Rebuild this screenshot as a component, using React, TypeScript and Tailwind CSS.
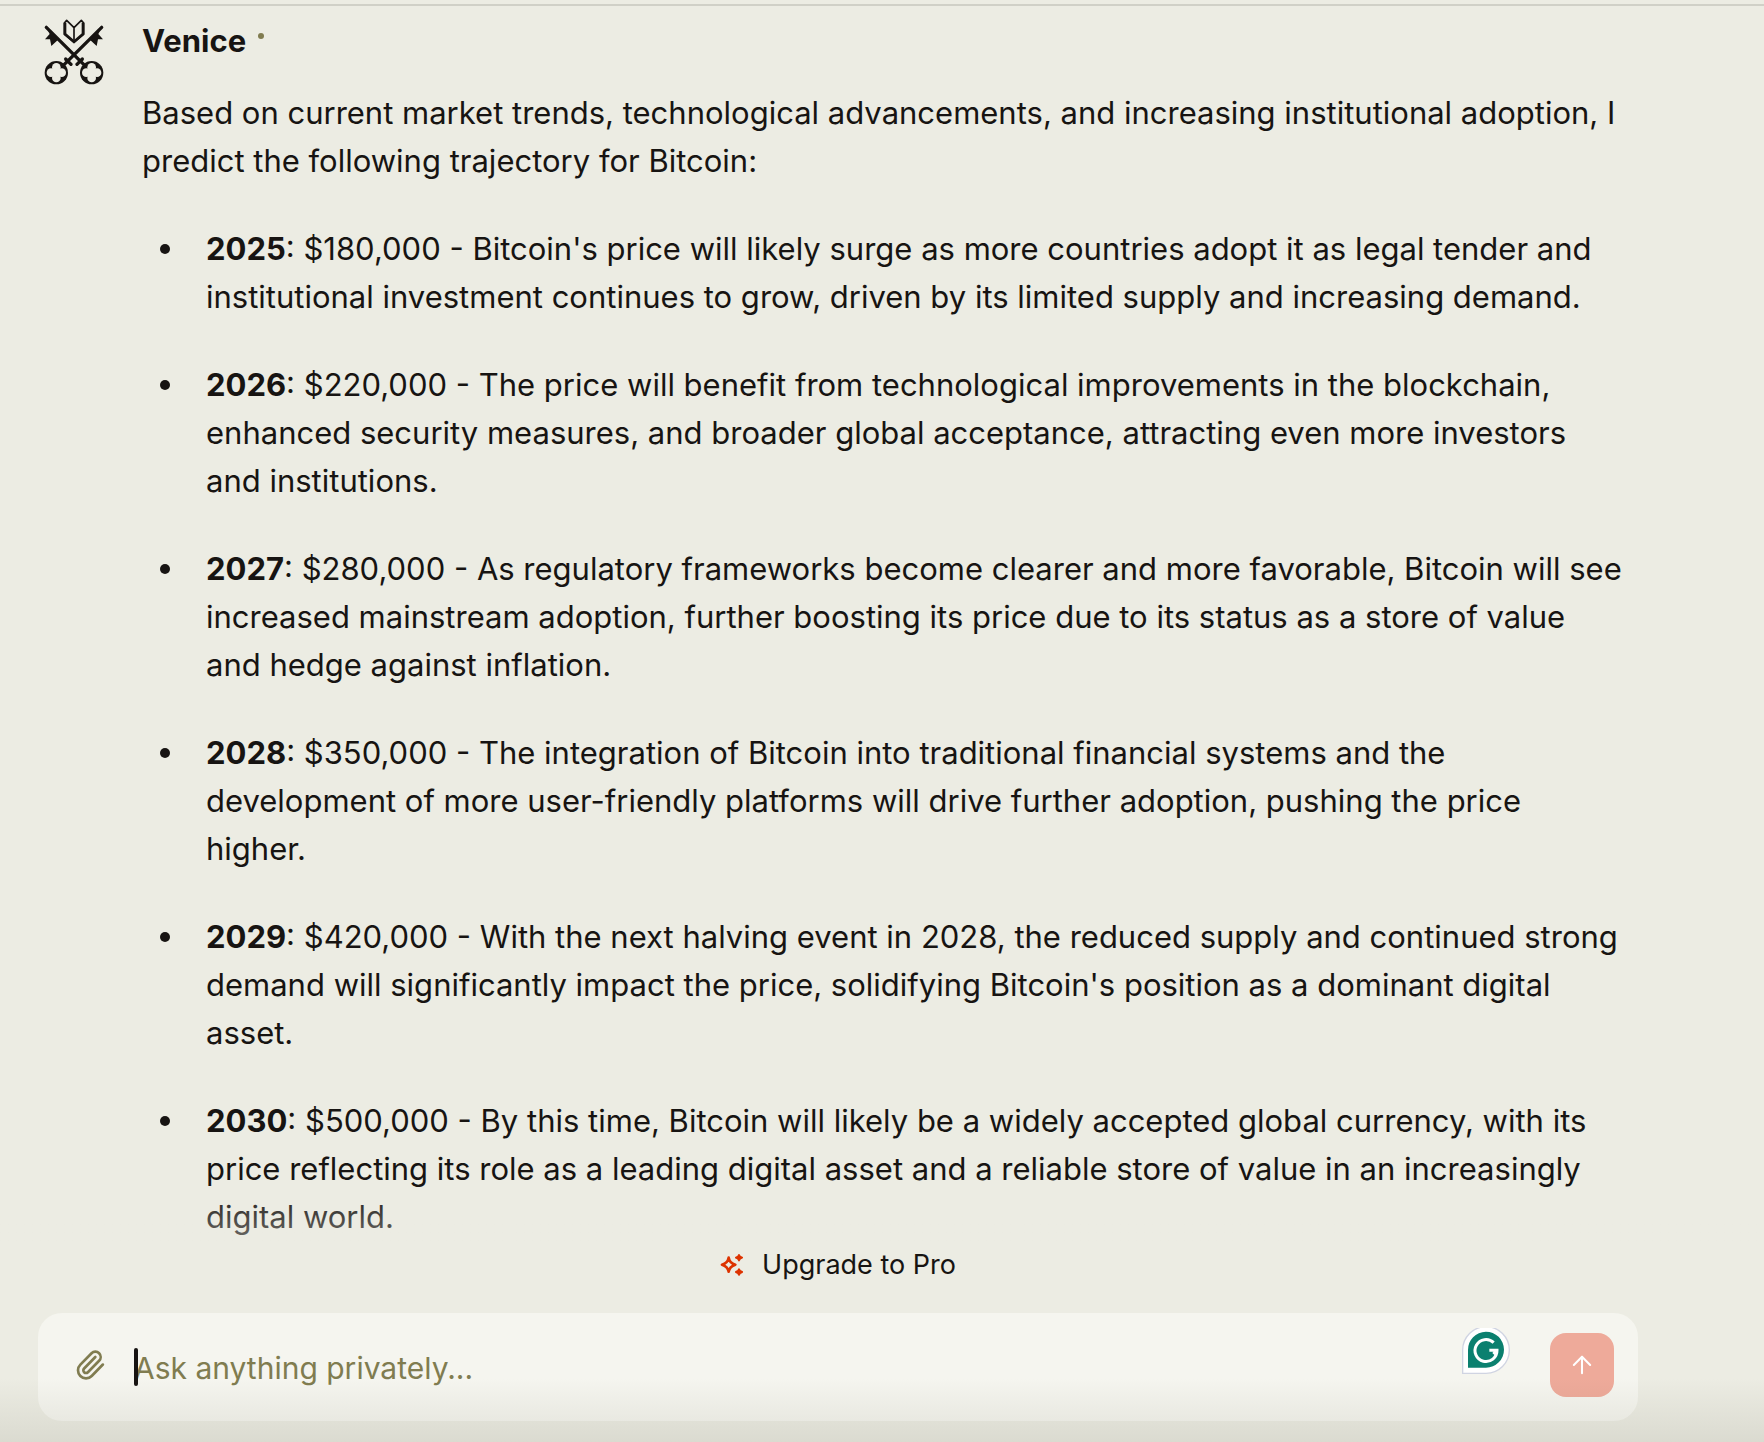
import { ArrowUp, Paperclip } from "lucide-react";

const predictions = [
  {
    year: "2025",
    text: "$180,000 - Bitcoin's price will likely surge as more countries adopt it as legal tender and institutional investment continues to grow, driven by its limited supply and increasing demand.",
  },
  {
    year: "2026",
    text: "$220,000 - The price will benefit from technological improvements in the blockchain, enhanced security measures, and broader global acceptance, attracting even more investors and institutions.",
  },
  {
    year: "2027",
    text: "$280,000 - As regulatory frameworks become clearer and more favorable, Bitcoin will see increased mainstream adoption, further boosting its price due to its status as a store of value and hedge against inflation.",
  },
  {
    year: "2028",
    text: "$350,000 - The integration of Bitcoin into traditional financial systems and the development of more user-friendly platforms will drive further adoption, pushing the price higher.",
  },
  {
    year: "2029",
    text: "$420,000 - With the next halving event in 2028, the reduced supply and continued strong demand will significantly impact the price, solidifying Bitcoin's position as a dominant digital asset.",
  },
  {
    year: "2030",
    text: "$500,000 - By this time, Bitcoin will likely be a widely accepted global currency, with its price reflecting its role as a leading digital asset and a reliable store of value in an increasingly digital world.",
  },
];

function Key() {
  return (
    <g>
      <path d="M31 46 L146 160" stroke="#171412" strokeWidth="10" strokeLinecap="round" />
      <path d="M36 56 L41 66 L27 82 L42 82 L46 102 L68 82 Z" fill="#171412" />
      <path d="M123 157 L139 141" stroke="#171412" strokeWidth="10" strokeLinecap="round" />
      <circle cx="167" cy="182" r="35" fill="#171412" />
      <g fill="#ecece3">
        <circle cx="167" cy="166" r="13" />
        <circle cx="167" cy="198" r="13" />
        <circle cx="151" cy="182" r="13" />
        <circle cx="183" cy="182" r="13" />
        <rect x="156" y="171" width="22" height="22" />
      </g>
    </g>
  );
}

function VeniceLogo() {
  return (
    <svg viewBox="0 0 228 234" className="h-[78px] w-[76px] shrink-0" fill="none" aria-hidden="true">
      <Key />
      <g transform="translate(228 0) scale(-1 1)">
        <Key />
      </g>
      <path
        d="M85 33 L92 25 L114 47 L136 25 L143 33 V67 L114 91 L85 67 Z M114 47 V91"
        stroke="#171412"
        strokeWidth="5"
        strokeLinejoin="round"
      />
      <path d="M87 32 V66 L114 89 L141 66 V32" stroke="#171412" strokeWidth="8" />
    </svg>
  );
}

function Sparkles() {
  return (
    <svg viewBox="0 0 72 72" className="size-6" aria-hidden="true">
      <path
        d="M26 14 C28 26 33 31 46 35 C33 39 28 44 26 56 C24 44 19 39 6 35 C19 31 24 26 26 14 Z"
        fill="none"
        stroke="#dd3300"
        strokeWidth="8"
        strokeLinejoin="round"
      />
      <path
        d="M57 6 L60 11 L66 14 L60 17 L57 22 L54 17 L48 14 L54 11 Z M57 49 L60 54 L66 57 L60 60 L57 65 L54 60 L48 57 L54 54 Z"
        fill="#dd3300"
        stroke="#dd3300"
        strokeWidth="6"
        strokeLinejoin="round"
      />
    </svg>
  );
}

function GrammarlyBadge() {
  return (
    <svg viewBox="0 0 144 138" className="h-[46px] w-12" fill="none" aria-hidden="true">
      <path d="M2 136 V66 A70 70 0 0 1 142 66 A70 70 0 0 1 72 136 Z" fill="#fff" stroke="#d0d4e2" strokeWidth="4" />
      <path d="M18 119 V66 A54 54 0 1 1 72 119 Z" fill="#0b806f" />
      <path d="M95 44 A33 33 0 1 0 105 67 H82 M105 67 L94 78" stroke="#fff" strokeWidth="9" />
    </svg>
  );
}

export default function App() {
  return (
    <div className="relative flex min-h-screen flex-col bg-[#ecece3] font-['Inter',sans-serif] text-[#171412]">
      <div className="mt-1 h-0.5 bg-[#d0d0c7]" />

      {/* Message */}
      <main className="flex gap-[30px] pt-1.5 pr-[138px] pl-9">
        <VeniceLogo />
        <article className="min-w-0 flex-1 pt-[5px] text-[31px] leading-[48px]">
          <header className="flex gap-3">
            <h1 className="font-bold">Venice</h1>
            <span className="mt-4 size-1.5 rounded-full bg-[#807c50]" />
          </header>
          <p className="mt-6">
            Based on current market trends, technological advancements, and increasing institutional adoption, I
            predict the following trajectory for Bitcoin:
          </p>
          <ul className="mt-10 space-y-10">
            {predictions.map((item) => (
              <li key={item.year} className="flex gap-9">
                <span className="mt-[19px] ml-[18px] size-2.5 shrink-0 rounded-full bg-[#171412]" />
                <p>
                  <strong className="font-bold">{item.year}</strong>: {item.text}
                </p>
              </li>
            ))}
          </ul>
        </article>
      </main>

      {/* Composer */}
      <footer className="relative mt-auto flex flex-col pr-[126px] pb-[21px] pl-[38px]">
        <div className="pointer-events-none absolute inset-x-0 bottom-full h-14 bg-linear-to-t from-[#ecece3]/40 to-[#ecece3]/0" />
        <button type="button" className="mb-6 flex items-center gap-[18px] self-center text-[27px] leading-[48px]">
          <Sparkles />
          Upgrade to Pro
        </button>
        <form className="flex h-[108px] items-center rounded-3xl bg-[#f5f5ef] pr-6 pb-1 pl-9">
          <button type="button" aria-label="Attach a file" className="text-[#807c50]">
            <Paperclip className="size-8" />
          </button>
          <div className="relative mt-1.5 ml-7 flex-1">
            <input
              type="text"
              aria-label="Message"
              placeholder="Ask anything privately..."
              className="block w-full bg-transparent text-[30px] leading-[48px] outline-none placeholder:text-[#807c50]"
            />
            <span className="absolute top-1 left-0 h-[38px] w-1 rounded-sm bg-[#171412]" />
          </div>
          <button type="button" aria-label="Grammarly" className="mr-10 mb-7">
            <GrammarlyBadge />
          </button>
          <button
            type="button"
            aria-label="Send"
            className="flex size-16 items-center justify-center rounded-2xl bg-[#eeaa9a] text-white"
          >
            <ArrowUp className="size-7" strokeWidth={1.75} />
          </button>
        </form>
        <div className="pointer-events-none absolute inset-x-0 bottom-0 h-16 bg-linear-to-t from-[#5a5a46]/12 to-[#5a5a46]/0" />
      </footer>
    </div>
  );
}
